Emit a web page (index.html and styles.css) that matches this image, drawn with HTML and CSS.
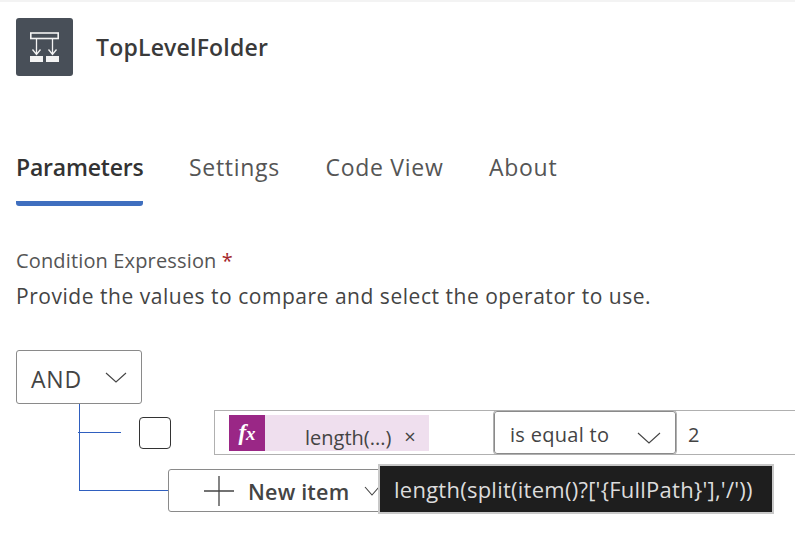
FILE: index.html
```html
<!DOCTYPE html>
<html lang="en">
<head>
<meta charset="utf-8">
<title>TopLevelFolder</title>
<link rel="stylesheet" href="styles.css">
</head>
<body>
<div class="page">
  <header class="header">
    <div class="app-icon">
      <svg width="57" height="58" viewBox="0 0 57 58" fill="none" stroke="#f3f3f3">
        <rect x="14.800" y="15" width="27.400" height="5.500" stroke-width="1.600"/>
        <path d="M20.500 20v16.500M36.500 20v16.500M16.500 31.500l4 5 4-5M32.500 31.500l4 5 4-5" stroke-width="1.300"/>
        <rect x="14" y="38" width="13" height="6" fill="#f3f3f3" stroke="none"/>
        <rect x="30" y="38" width="13" height="6" fill="#f3f3f3" stroke="none"/>
      </svg>
    </div>
    <h1 class="title">TopLevelFolder</h1>
  </header>
  <nav class="tabs">
    <a class="tab tab-active">Parameters</a>
    <a class="tab">Settings</a>
    <a class="tab">Code View</a>
    <a class="tab">About</a>
  </nav>
  <section class="form">
    <div class="label">Condition Expression <span class="req">*</span></div>
    <div class="hint">Provide the values to compare and select the operator to use.</div>
    <div class="and-box">
      <span class="and-text">AND</span>
      <svg class="chev" width="24" height="12" viewBox="0 0 24 12" fill="none" stroke="#444" stroke-width="1.100"><path d="M2 2l10 9 10-9"/></svg>
    </div>
    <div class="tree">
      <div class="row row-cond">
        <div class="branch"><div class="tick"></div></div>
        <div class="checkbox"></div>
        <div class="cond">
          <div class="chip">
            <div class="fx">f<span class="fx-x">x</span></div>
            <span class="chip-text">length(...)</span>
            <span class="chip-x">×</span>
          </div>
          <div class="op">
            <span class="op-text">is equal to</span>
            <svg width="24" height="13" viewBox="0 0 24 13" fill="none" stroke="#444" stroke-width="1.100"><path d="M1 2l11 10 11-10"/></svg>
          </div>
          <div class="val">2</div>
        </div>
      </div>
      <div class="row row-new">
        <div class="branch-end"></div>
        <div class="new-btn">
          <svg width="30" height="30" viewBox="0 0 30 30" stroke="#444" stroke-width="1.300"><path d="M15 0v30M0 15h30"/></svg>
          <span class="new-text">New item</span>
          <svg width="16" height="10" viewBox="0 0 16 10" fill="none" stroke="#444" stroke-width="1.100"><path d="M1 1l7 8 7-8"/></svg>
        </div>
        <div class="tooltip">length(split(item()?['{FullPath}'],'/'))</div>
      </div>
    </div>
  </section>
</div>
</body>
</html>
```

FILE: styles.css
```css
* { box-sizing: border-box; }
html, body { margin: 0; padding: 0; background: #fff; }
body {
  width: 795px;
  height: 548px;
  overflow: hidden;
  font-family: "Open Sans", "Noto Sans", "Liberation Sans", sans-serif;
  color: #333;
}
.page { border-top: 2px solid #f3f3f3; }
.header { display: flex; align-items: center; gap: 23px; padding: 16px 0 0 16px; }
.app-icon { width: 57px; height: 58px; background: #484f58; border-radius: 3px; }
.app-icon svg { display: block; }
.title { margin: 0; font-size: 23px; font-weight: 600; color: #3a3a3a; letter-spacing: 0.2px; }
.tabs { display: flex; gap: 45.500px; padding: 75px 0 0 16px; }
.tab { font-size: 23px; line-height: 32px; color: #555; padding-bottom: 18px; border-bottom: 5px solid transparent; letter-spacing: 0.72px; }
.tab-active { color: #333; font-weight: 600; border-bottom-color: #3f6fbf; border-radius: 0 0 3px 3px; letter-spacing: -0.2px; }
.form { padding: 0 0 0 16px; }
.label { font-size: 20px; line-height: 26px; margin-top: 42px; color: #555; letter-spacing: 0.15px; }
.req { color: #a4262c; }
.hint { font-size: 21px; line-height: 28px; margin-top: 8px; color: #444; letter-spacing: 0.53px; }
.and-box { margin-top: 40px; width: 126px; height: 54px; border: 1px solid #8a8a8a; border-radius: 3px; display: flex; align-items: center; justify-content: space-between; padding: 0 13px 0 14px; font-size: 23px; color: #444; letter-spacing: 0.8px; }
.and-text { padding-top: 3px; }
.tree { margin-left: 63px; }
.row { display: flex; }
.row-cond { height: 65px; }
.branch { border-left: 1px solid #2f5fbf; width: 43px; }
.tick { margin-top: 28px; height: 1px; background: #2f5fbf; margin-left: -2px; width: 43px; }
.checkbox { width: 32px; height: 32px; margin: 13px 0 0 17px; border: 1px solid #333; border-radius: 4px; }
.cond { margin: 6px 0 0 43px; width: 581px; height: 45px; border: 1px solid #b0b0b0; border-right: 0; display: flex; align-items: stretch; flex-shrink: 0; }
.chip { width: 200px; height: 36px; margin: 4px 0 0 14px; background: #efdfee; display: flex; align-items: center; font-size: 20px; color: #444; }
.fx { width: 36px; height: 36px; background: #9a2786; color: #fff; font-family: "Liberation Serif", serif; font-style: italic; font-weight: 700; font-size: 23px; text-align: center; line-height: 36px; }
.fx-x { font-size: 19px; }
.chip-text { margin: 8px 0 0 40px; }
.chip-x { margin: 7px 0 0 13px; font-size: 20px; }
.op { margin-left: 65px; width: 182px; border: 1px solid #8a8a8a; border-radius: 3px; display: flex; align-items: center; justify-content: space-between; padding: 0 14px 0 15px; font-size: 20px; color: #444; outline: 1px solid #b0b0b0; letter-spacing: 0.3px; }
.op-text { padding-top: 3px; }
.op svg { margin-top: 10px; }
.val { padding: 2px 0 0 12px; font-size: 20px; line-height: 43px; color: #444; }
.row-new { position: relative; height: 50px; align-items: flex-start; }
.branch-end { width: 89px; height: 22px; border-left: 1px solid #2f5fbf; border-bottom: 1px solid #2f5fbf; }
.new-btn { width: 216px; height: 43px; border: 1px solid #8a8a8a; border-radius: 3px; display: flex; align-items: center; padding-left: 35px; font-size: 21.500px; font-weight: 600; color: #444; flex-shrink: 0; }
.new-text { margin: 0 15px 0 14px; padding-top: 1px; letter-spacing: 0.2px; }
.tooltip { position: absolute; left: 299px; top: -5px; width: 396px; height: 50px; background: #1e1e1e; border: 2px solid #c8c8c8; color: #dcdcdc; font-size: 22px; line-height: 46px; padding-left: 14px; letter-spacing: 0.25px; white-space: nowrap; }
```
